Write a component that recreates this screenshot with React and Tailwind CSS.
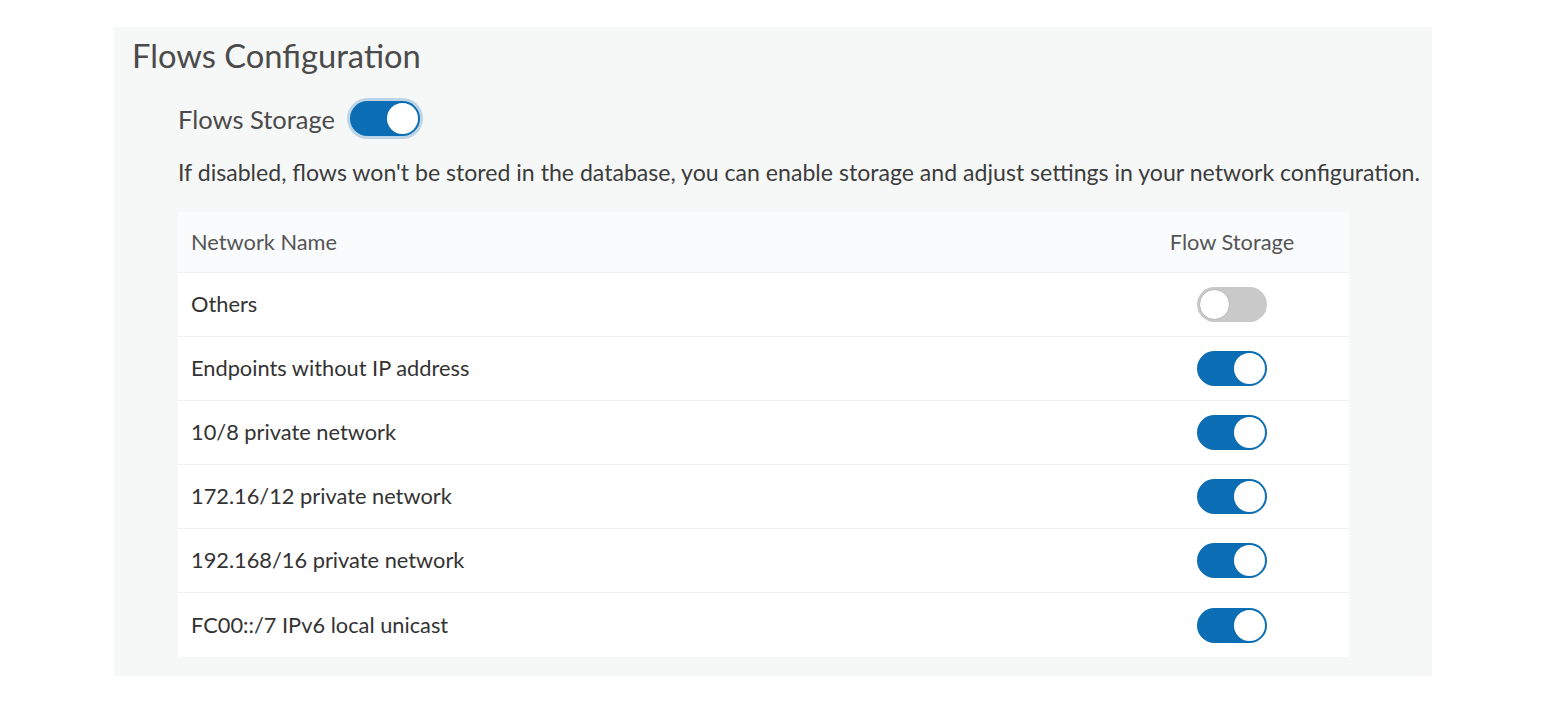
import React from "react";

function Toggle({ on, focus }) {
  return (
    <div
      className={
        "relative h-[35px] w-[70px] rounded-full shrink-0 " +
        (on ? "bg-[#0b6db3]" : "bg-[#c9c9c9]") +
        (focus ? " shadow-[0_0_0_3px_rgba(11,109,179,0.25)]" : "")
      }
    >
      <div
        className={
          "absolute top-[2px] h-[31px] w-[31px] rounded-full bg-white " +
          (on ? "right-[2px]" : "left-[2px] border border-[#b5b5b5]")
        }
      />
    </div>
  );
}

const rows = [
  ["Others", false],
  ["Endpoints without IP address", true],
  ["10/8 private network", true],
  ["172.16/12 private network", true],
  ["192.168/16 private network", true],
  ["FC00::/7 IPv6 local unicast", true],
];

export default function App() {
  return (
    <div className="w-[1544px] h-[704px] bg-white pt-[27px] pl-[114px]" style={{ fontFamily: "Lato, 'Noto Sans', sans-serif" }}>
      <div className="w-[1318px] h-[649px] bg-[#f6f7f7] pt-[10px]">
        <h1 className="pl-[18px] text-[32.7px] leading-[38px] text-[#4b4b4b]">Flows Configuration</h1>
        <div className="pl-[64px] mt-[26px] flex items-center gap-[15px]">
          <span className="text-[25.5px] leading-[32px] text-[#4b4b4b]">Flows Storage</span>
          <Toggle on focus />
        </div>
        <p className="pl-[64px] mt-[22px] text-[23.1px] leading-[28px] text-[#3c3c3c] whitespace-nowrap">
          If disabled, flows won't be stored in the database, you can enable storage and adjust settings in your network configuration.
        </p>
        <div className="ml-[64px] mt-[26px] w-[1171px] bg-white">
          <div className="flex items-center h-[61px] bg-[#fafbfc] border-b border-[#eef0f1] text-[21.8px] text-[#555]">
            <div className="flex-1 pl-[13px]">Network Name</div>
            <div className="w-[234px] text-center">Flow Storage</div>
          </div>
          {rows.map(([name, on], i) => (
            <div
              key={name}
              className={"flex items-center h-[64px] text-[21.8px] text-[#333] " + (i < rows.length - 1 ? "border-b border-[#eef0f1]" : "")}
            >
              <div className="flex-1 pl-[13px]">{name}</div>
              <div className="w-[234px] flex justify-center">
                <Toggle on={on} />
              </div>
            </div>
          ))}
        </div>
      </div>
    </div>
  );
}
